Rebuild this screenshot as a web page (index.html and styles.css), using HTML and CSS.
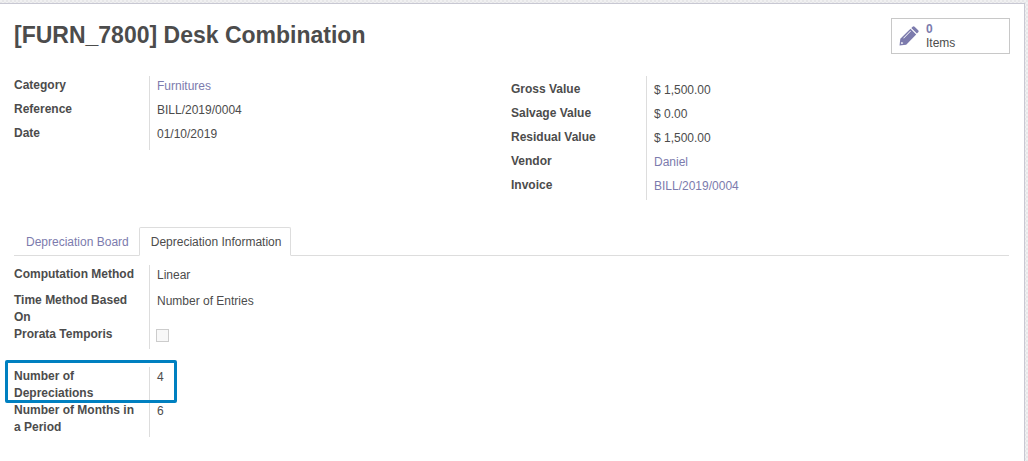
FILE: index.html
```html
<!DOCTYPE html>
<html lang="en">
<head>
<meta charset="utf-8">
<title>[FURN_7800] Desk Combination</title>
<link rel="stylesheet" href="styles.css">
</head>
<body>
<main class="sheet">
  <header class="sheet-header">
    <h1 class="title">[FURN_7800] Desk Combination</h1>
    <button class="stat-button" type="button">
      <svg class="stat-icon" viewBox="0 0 20 20" aria-hidden="true">
        <path fill="#7c7bad" fill-rule="evenodd" d="M.5 19.500l.8-6.700L11.500 2.800l5.700 5.700-10 10.200zM2.400 15.900l-.3 2 2-.3v-1h-1v-.7zM4.800 12.400l7.100-7.100-.5-.5-7.100 7.100zM12.300 2l1.300-1.300q1-.9 2 0l3.600 3.600q.9 1 0 2l-1.300 1.300z"/>
      </svg>
      <span class="stat-text"><span class="stat-value">0</span><span>Items</span></span>
    </button>
  </header>

  <div class="columns">
    <dl class="group group-main">
      <div class="row"><dt>Category</dt><dd><a href="#furnitures">Furnitures</a></dd></div>
      <div class="row"><dt>Reference</dt><dd>BILL/2019/0004</dd></div>
      <div class="row"><dt>Date</dt><dd>01/10/2019</dd></div>
    </dl>
    <dl class="group group-values">
      <div class="row"><dt>Gross Value</dt><dd>$ 1,500.00</dd></div>
      <div class="row"><dt>Salvage Value</dt><dd>$ 0.00</dd></div>
      <div class="row"><dt>Residual Value</dt><dd>$ 1,500.00</dd></div>
      <div class="row"><dt>Vendor</dt><dd><a href="#daniel">Daniel</a></dd></div>
      <div class="row"><dt>Invoice</dt><dd><a href="#invoice">BILL/2019/0004</a></dd></div>
    </dl>
  </div>

  <nav class="tabs">
    <a class="tab" href="#board">Depreciation Board</a>
    <a class="tab tab-active" href="#information" aria-current="page">Depreciation Information</a>
  </nav>

  <section class="columns tab-page" id="information">
    <div>
      <dl class="group group-method">
        <div class="row row-tall"><dt>Computation Method</dt><dd>Linear</dd></div>
        <div class="row"><dt>Time Method Based On</dt><dd>Number of Entries</dd></div>
        <div class="row row-check"><dt><label for="prorata">Prorata Temporis</label></dt><dd><input class="check" type="checkbox" id="prorata" disabled></dd></div>
      </dl>
      <dl class="group group-period">
        <div class="row highlight"><dt>Number of Depreciations</dt><dd>4</dd></div>
        <div class="row"><dt>Number of Months in a Period</dt><dd>6</dd></div>
      </dl>
    </div>
  </section>
</main>
</body>
</html>
```
FILE: styles.css
```css
*,
*::after {
  box-sizing: border-box;
}

body {
  margin: 0;
  padding: 3px 3px 0 0;
  min-height: 100vh;
  display: flex;
  background: repeating-conic-gradient(#e6e6e8 0 25%, #f0f0f1 0 50%) 0 0 / 4px 4px;
  color: #4c4c4c;
  font: 12px/18px "Liberation Sans", Arial, sans-serif;
}

a {
  color: #7c7bad;
  text-decoration: none;
}

.sheet {
  flex: 1;
  padding: 14px 14px 24px;
  background: #fff;
  border-top: 1px solid #c8c8d3;
  border-right: 1px solid #c8c8d3;
}

.sheet-header {
  display: flex;
  justify-content: space-between;
  align-items: flex-start;
  margin-bottom: 22px;
}

.title {
  margin: 0;
  padding-top: 2px;
  font-size: 23px;
  line-height: 30px;
}

.stat-button {
  display: flex;
  align-items: center;
  gap: 7px;
  width: 119px;
  height: 36px;
  padding: 0 7px;
  border: 1px solid #c8c8c8;
  background: #fff;
  color: #4c4c4c;
  font: 12px/14px "Liberation Sans", Arial, sans-serif;
  text-align: left;
}

.stat-icon {
  width: 20px;
  height: 20px;
}

.stat-text {
  display: flex;
  flex-direction: column;
}

.stat-value {
  color: #7c7bad;
  font-weight: bold;
}

.columns {
  display: grid;
  grid-template-columns: 1fr 1fr;
  align-items: start;
  padding-right: 2px;
}

.group {
  margin: 0;
  background: linear-gradient(#ddd, #ddd) 135px 0 / 1px 100% no-repeat;
}

.row {
  display: grid;
  grid-template-columns: 135px 1fr;
  min-height: 24px;
}

.row dt {
  padding-right: 15px;
  font-weight: bold;
}

.row dd {
  margin: 0;
  padding: 1px 0 0 8px;
}

.group-main {
  padding-bottom: 2px;
}

.group-values {
  padding-top: 4px;
}

.tabs {
  display: flex;
  margin: 27px 1px 0 0;
  border-bottom: 1px solid #ddd;
}

.tab {
  margin-bottom: -1px;
  padding: 5px 9px 4px 11px;
  border: 1px solid transparent;
}

.tab-active {
  border-color: #ddd #ddd #fff;
  border-radius: 2px 2px 0 0;
  background: #fff;
  color: #4c4c4c;
}

.tab-page {
  padding-top: 9px;
  line-height: 17px;
}

.group-method {
  padding-top: 1px;
}

.row-tall {
  min-height: 26px;
}

.row.row-check {
  min-height: 23px;
}

.row.row-check dd {
  padding: 3px 0 0 7px;
}

.check {
  display: block;
  appearance: none;
  width: 13px;
  height: 13px;
  margin: 0;
  border: 1px solid #ccc;
  background: #f8f8f8;
}

.group-period {
  margin-top: 18px;
  padding: 1px 0;
}

.highlight {
  position: relative;
}

.highlight::after {
  content: "";
  position: absolute;
  top: -8px;
  left: -9px;
  width: 172px;
  height: 43px;
  border: 3px solid #0080c0;
  border-radius: 2px;
}
```
